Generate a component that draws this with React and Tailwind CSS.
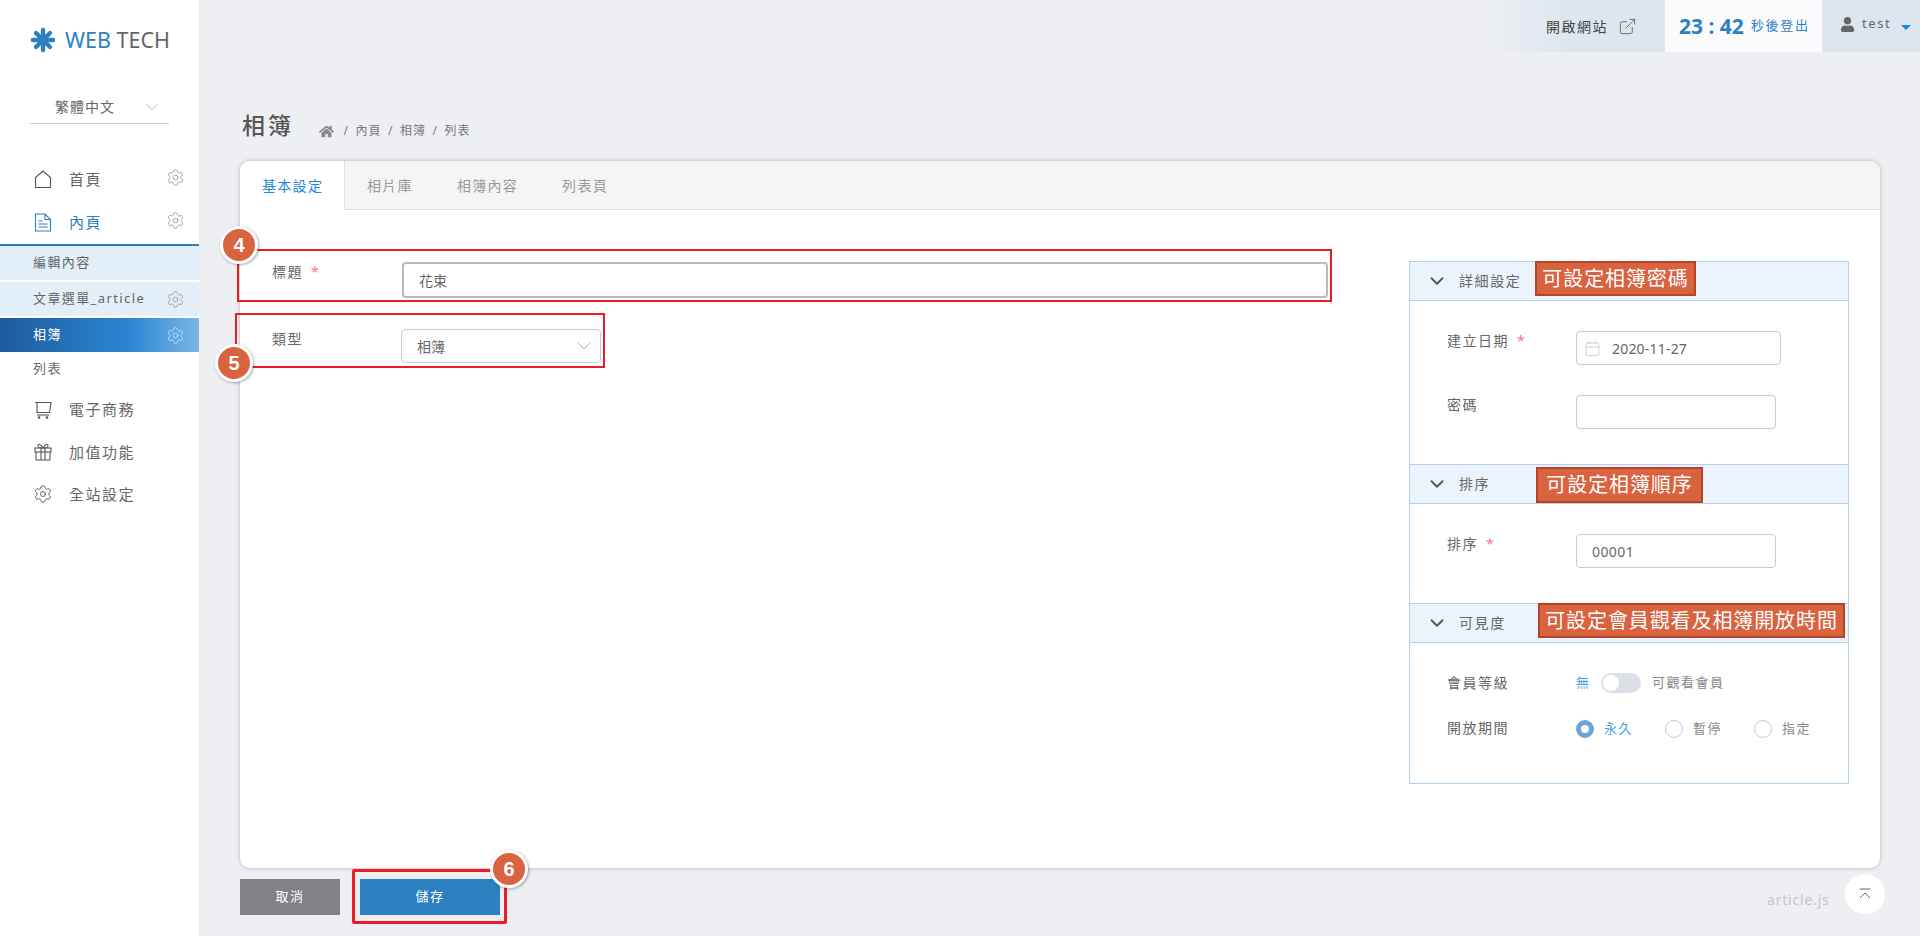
import React from "react";
import { FaHome, FaUser } from "react-icons/fa";
import { ChevronDown, Settings, ExternalLink, Calendar } from "lucide-react";

const Gear = ({ className }) => <Settings className={className} strokeWidth={1.1} />;

function Logo() {
  return (
    <svg width="26" height="26" viewBox="0 0 26 26" className="shrink-0">
      <g stroke="#2c80c0" strokeWidth="4.4" strokeLinecap="round">
        <line x1="13" y1="3" x2="13" y2="23" />
        <line x1="3" y1="13" x2="23" y2="13" />
        <line x1="6" y1="6" x2="20" y2="20" />
        <line x1="20" y1="6" x2="6" y2="20" />
      </g>
    </svg>
  );
}

function HouseIcon() {
  return (
    <svg width="18" height="19" viewBox="0 0 18 19" fill="none" stroke="#555" strokeWidth="1.1">
      <path d="M1.5 17.5 V7.5 L9 1 L16.5 7.5 V17.5 Z" />
    </svg>
  );
}

function FileIcon() {
  return (
    <svg width="18" height="19" viewBox="0 0 18 19" fill="none" stroke="#2c80c0" strokeWidth="1.1">
      <path d="M1.5 1 H11 L16.5 6.5 V18 H1.5 Z" />
      <path d="M11 1 V6.5 H16.5" />
      <path d="M4.5 8 H8.5 M4.5 11 H13.5 M4.5 14 H13.5" />
    </svg>
  );
}

function CartIcon() {
  return (
    <svg width="18" height="18" viewBox="0 0 18 18" fill="none" stroke="#555" strokeWidth="1.1">
      <path d="M1 1.5 H17 L15.5 11.5 H3 V1.5" />
      <path d="M3 14 H15" />
      <circle cx="5" cy="16.5" r="0.8" fill="#555" />
      <circle cx="13" cy="16.5" r="0.8" fill="#555" />
    </svg>
  );
}

function GiftIcon() {
  return (
    <svg width="18" height="18" viewBox="0 0 18 18" fill="none" stroke="#555" strokeWidth="1.1">
      <rect x="1" y="5" width="16" height="4" />
      <path d="M2 9 V17 H16 V9" />
      <path d="M7 5 V17 M11 5 V17" />
      <path d="M9 5 C7 1 3.5 0.5 4 3 C4.2 4.2 6 5 9 5 C12 5 13.8 4.2 14 3 C14.5 0.5 11 1 9 5" />
    </svg>
  );
}

function NavRow({ icon, label, gear, active, h }) {
  return (
    <div className={`flex items-center pl-[34px] relative ${h}`}>
      <span className="w-[35px] flex items-center">{icon}</span>
      <span className={`text-[15px] tracking-[1.5px] ${active ? "text-[#2c80c0]" : "text-[#666]"}`}>{label}</span>
      {gear && <Gear className="absolute left-[166px] top-[10px] w-[19px] h-[19px] text-[#999]" />}
    </div>
  );
}

function SubRow({ label, gear, className }) {
  return (
    <div className={`h-[34px] flex items-center justify-between pl-[33px] pr-[14px] text-[13px] tracking-[1.4px] ${className}`}>
      <span>{label}</span>
      {gear && <Gear className="w-[19px] h-[19px]" />}
    </div>
  );
}

function Sidebar() {
  return (
    <aside className="w-[199px] shrink-0 bg-white h-full">
      <div className="h-[80px] flex items-center pl-[30px] gap-[9px]">
        <Logo />
        <span className="text-[21.5px] leading-none whitespace-nowrap">
          <span className="text-[#2c80c0]">WEB</span> <span className="text-[#666]">TECH</span>
        </span>
      </div>
      <div className="mt-[10px] ml-[30px] w-[139px] h-[34px] border-b border-[#c8c8d8] flex items-center pl-[25px] text-[14px] tracking-[1px] text-[#666] relative">
        繁體中文
        <ChevronDown className="absolute right-[7px] top-[7px] w-[20px] h-[20px] text-[#aaa]" strokeWidth={1} />
      </div>
      <div className="mt-[34px]">
        <NavRow h="h-[43px]" icon={<HouseIcon />} label="首頁" gear />
        <NavRow h="h-[43px]" active icon={<FileIcon />} label="內頁" gear />
        <div className="border-t-2 border-[#2c80c0]">
          <SubRow label="編輯內容" className="bg-[#e3eff8] text-[#666]" />
          <SubRow label="文章選單_article" gear className="mt-[2px] bg-[#e3eff8] text-[#666] [&_svg]:text-[#999]" />
          <SubRow label="相簿" gear className="mt-[2px] text-white bg-[linear-gradient(90deg,#1f5a9c_0%,#2a86d2_65%,#7ab6e6_100%)] [&_svg]:text-[#cfe3f5]" />
          <SubRow label="列表" className="text-[#666]" />
        </div>
        <div className="mt-[2px]">
          <NavRow h="h-[43px]" icon={<CartIcon />} label="電子商務" />
          <NavRow h="h-[42px]" icon={<GiftIcon />} label="加值功能" />
          <NavRow h="h-[42px]" icon={<Settings className="w-[20px] h-[20px] -ml-[1px] text-[#555]" strokeWidth={1.1} />} label="全站設定" />
        </div>
      </div>
    </aside>
  );
}

function TopBar() {
  return (
    <div className="h-[52px] flex justify-end">
      <div className="w-[175px] bg-[linear-gradient(90deg,#edeff3_0%,#dde6ef_45%)] flex items-center justify-end pr-[28px] text-[14px] tracking-[1.5px] text-[#444] gap-[10px]">
        開啟網站
        <ExternalLink className="w-[19px] h-[19px] text-[#555]" strokeWidth={1} />
      </div>
      <div className="w-[157px] bg-[#fbfbfd] flex items-center pl-[14px] text-[#2c80c0]">
        <span className="text-[21px] font-bold whitespace-nowrap leading-none">23 : 42</span>
        <span className="text-[13px] tracking-[1.7px] ml-[7px] whitespace-nowrap">秒後登出</span>
      </div>
      <div className="w-[98px] bg-[#dde6ef] flex items-center pl-[18px] text-[#666] pb-[4px]">
        <FaUser className="w-[15px] h-[15px] text-[#666]" />
        <span className="text-[13px] tracking-[1.6px] ml-[7px]">test</span>
        <span className="ml-[10px] mt-[7px] w-0 h-0 border-x-[5px] border-x-transparent border-t-[5px] border-t-[#1e88d8]" />
      </div>
    </div>
  );
}

function Star() {
  return <span className="ml-[8px] text-[#f47c7c] text-[14px]">*</span>;
}

function Label({ children, star, w }) {
  return (
    <div className={`${w} shrink-0 text-[14px] leading-[20px] tracking-[1.5px] text-[#666]`}>
      {children}
      {star && <Star />}
    </div>
  );
}

function SectionHeader({ title, note, noteClass, first }) {
  return (
    <div className={`relative bg-[#ebf4fc] border-b border-[#b3d2ee] flex items-center pl-[16px] ${first ? "h-[39px]" : "h-[40px] border-t"}`}>
      <ChevronDown className="w-[22px] h-[22px] text-[#555]" strokeWidth={2} />
      <span className="ml-[11px] pb-[2px] text-[14px] tracking-[1.6px] text-[#666]">{title}</span>
      <div className={`absolute flex items-center justify-center bg-[#d9623f] border-2 border-[#b5432a] text-white text-[20px] tracking-[0.9px] whitespace-nowrap ${noteClass}`}>
        {note}
      </div>
    </div>
  );
}

function Field({ children, w }) {
  return (
    <div className={`${w} h-[34px] rounded-[4px] border border-[#c8c8d8] bg-white flex items-center text-[14px] text-[#666]`}>
      {children}
    </div>
  );
}

function Radio({ on, label, w }) {
  return (
    <div className={`flex items-center ${w}`}>
      {on ? (
        <span className="w-[18px] h-[18px] rounded-full border-[5px] border-[#6ca3d9] bg-white" />
      ) : (
        <span className="w-[18px] h-[18px] rounded-full border border-[#c8c8d8] bg-white" />
      )}
      <span className={`ml-[10px] text-[13px] tracking-[1.5px] ${on ? "text-[#4aa0e6]" : "text-[#888]"}`}>{label}</span>
    </div>
  );
}

function RightPanel() {
  return (
    <div className="w-[440px] h-[523px] shrink-0 mt-[51px] border border-[#b3d2ee]">
      <SectionHeader first title="詳細設定" note="可設定相簿密碼" noteClass="left-[125px] top-[-1px] w-[161px] h-[35px]" />
      <div className="h-[163px] pl-[37px] pt-[30px]">
        <div className="flex items-start">
          <Label w="w-[129px]" star>建立日期</Label>
          <Field w="w-[205px]">
            <Calendar className="ml-[7px] w-[17px] h-[17px] text-[#c8c8d8]" strokeWidth={1.2} />
            <span className="ml-[11px] tracking-[0.2px]">2020-11-27</span>
          </Field>
        </div>
        <div className="flex items-start mt-[30px]">
          <Label w="w-[129px]">密碼</Label>
          <Field w="w-[200px]" />
        </div>
      </div>
      <SectionHeader title="排序" note="可設定相簿順序" noteClass="left-[126px] top-[2px] w-[167px] h-[36px]" />
      <div className="h-[99px] pl-[37px] pt-[30px]">
        <div className="flex items-start">
          <Label w="w-[129px]" star>排序</Label>
          <Field w="w-[200px]">
            <span className="ml-[15px] tracking-[0.4px]">00001</span>
          </Field>
        </div>
      </div>
      <SectionHeader title="可見度" note="可設定會員觀看及相簿開放時間" noteClass="left-[128px] top-[-1px] w-[307px] h-[35px]" />
      <div className="pl-[37px] pt-[29px]">
        <div className="flex items-center h-[22px]">
          <Label w="w-[129px]">會員等級</Label>
          <span className="text-[13px] text-[#4aa0e6] w-[25px]">無</span>
          <span className="w-[40px] h-[20px] rounded-full bg-[#dcdfe6] relative">
            <span className="absolute left-[2px] top-[2px] w-[16px] h-[16px] rounded-full bg-white" />
          </span>
          <span className="ml-[11px] text-[13px] tracking-[1.5px] text-[#888]">可觀看會員</span>
        </div>
        <div className="flex items-start mt-[24px]">
          <Label w="w-[129px]">開放期間</Label>
          <div className="flex items-center mt-[1px]">
            <Radio on label="永久" w="w-[89px]" />
            <Radio label="暫停" w="w-[89px]" />
            <Radio label="指定" />
          </div>
        </div>
      </div>
    </div>
  );
}

function Card() {
  const tabs = ["相片庫", "相簿內容", "列表頁"];
  return (
    <div className="h-[707px] rounded-[10px] bg-white shadow-[0_0_4px_rgba(0,0,0,0.25)] overflow-hidden">
      <div className="h-[49px] bg-[#f5f5f5] border-b border-[#dfdfe6] flex text-[14px] tracking-[1.3px]">
        <div className="h-[49px] w-[105px] pl-[22px] bg-white border-r border-[#dfdfe6] flex items-center text-[#1e88d8]">基本設定</div>
        {tabs.map((t) => (
          <div key={t} className="px-[22px] flex items-center text-[#999]">{t}</div>
        ))}
      </div>
      <div className="flex">
        <div className="w-[1088px] shrink-0 pl-[32px] pt-[52px]">
          <div className="flex items-start">
            <Label w="w-[130px]" star>標題</Label>
            <div className="flex-1 h-[36px] rounded-[4px] border-2 border-[#b9b9b9] flex items-center pl-[15px] text-[14px] text-[#666]">花束</div>
          </div>
          <div className="flex items-start mt-[31px] -ml-[1px]">
            <div className="pl-[1px]"><Label w="w-[129px]">類型</Label></div>
            <div className="w-[200px] h-[34px] rounded-[4px] border border-[#c8c8d8] flex items-center justify-between pl-[15px] pr-[4px] text-[14px] text-[#666]">
              相簿
              <ChevronDown className="w-[24px] h-[24px] text-[#aaa]" strokeWidth={1} />
            </div>
          </div>
        </div>
        <div className="ml-[81px]"><RightPanel /></div>
      </div>
    </div>
  );
}

function Badge({ n, className }) {
  return (
    <div className={`absolute w-[38px] h-[38px] rounded-full bg-[#d9623f] border-[3px] border-white shadow-[1px_1px_3px_rgba(0,0,0,0.35)] flex items-center justify-center text-white text-[20px] font-bold font-['Liberation_Sans',sans-serif] ${className}`}>
      {n}
    </div>
  );
}

export default function App() {
  return (
    <div className="relative flex w-[1920px] h-[936px] overflow-hidden bg-[#edeff3] font-['Noto_Sans','Noto_Sans_CJK_TC',sans-serif]">
      <Sidebar />
      <main className="flex-1 flex flex-col min-w-0">
        <TopBar />
        <div className="pl-[41px] pr-[40px]">
          <div className="mt-[53px] h-[40px] mb-[16px] flex items-center">
            <h1 className="ml-[2px] text-[23px] font-medium tracking-[3px] text-[#555]">相簿</h1>
            <div className="ml-[25px] mt-[12px] flex items-center text-[12px] tracking-[1px] text-[#777] gap-[6.5px]">
              <FaHome className="w-[15px] h-[15px] text-[#888] mr-[3px]" />
              <span>/</span><span>內頁</span><span>/</span><span>相簿</span><span>/</span><span>列表</span>
            </div>
          </div>
          <Card />
          <div className="mt-[11px] flex items-start relative">
            <button className="w-[100px] h-[36px] bg-[#808285] text-white text-[13px] tracking-[1.5px]">取消</button>
            <button className="ml-[20px] w-[140px] h-[36px] bg-[#2c80c0] text-white text-[13px] tracking-[1.5px]">儲存</button>
            <span className="absolute left-[1527px] top-[10px] text-[14px] tracking-[0.8px] text-[#c3c5cb] whitespace-nowrap">article.js</span>
            <div className="absolute left-[1605px] top-[-5px] w-[40px] h-[40px] rounded-full bg-white flex items-center justify-center">
              <svg width="14" height="12" viewBox="0 0 14 12" fill="none" stroke="#666" strokeWidth="1">
                <path d="M1.5 1 H12.5" />
                <path d="M2 10 L7 5 L12 10" />
              </svg>
            </div>
          </div>
        </div>
      </main>

      <div className="absolute left-[237px] top-[249px] w-[1095px] h-[53px] border-2 border-[#ed1c24]" />
      <div className="absolute left-[235px] top-[313px] w-[370px] h-[55px] border-2 border-[#ed1c24]" />
      <div className="absolute left-[352px] top-[869px] w-[155px] h-[55px] border-[3px] border-[#ed1c24] rounded-[2px]" />
      <Badge n="4" className="left-[220px] top-[226px]" />
      <Badge n="5" className="left-[215px] top-[344px]" />
      <Badge n="6" className="left-[490px] top-[850px]" />
    </div>
  );
}
